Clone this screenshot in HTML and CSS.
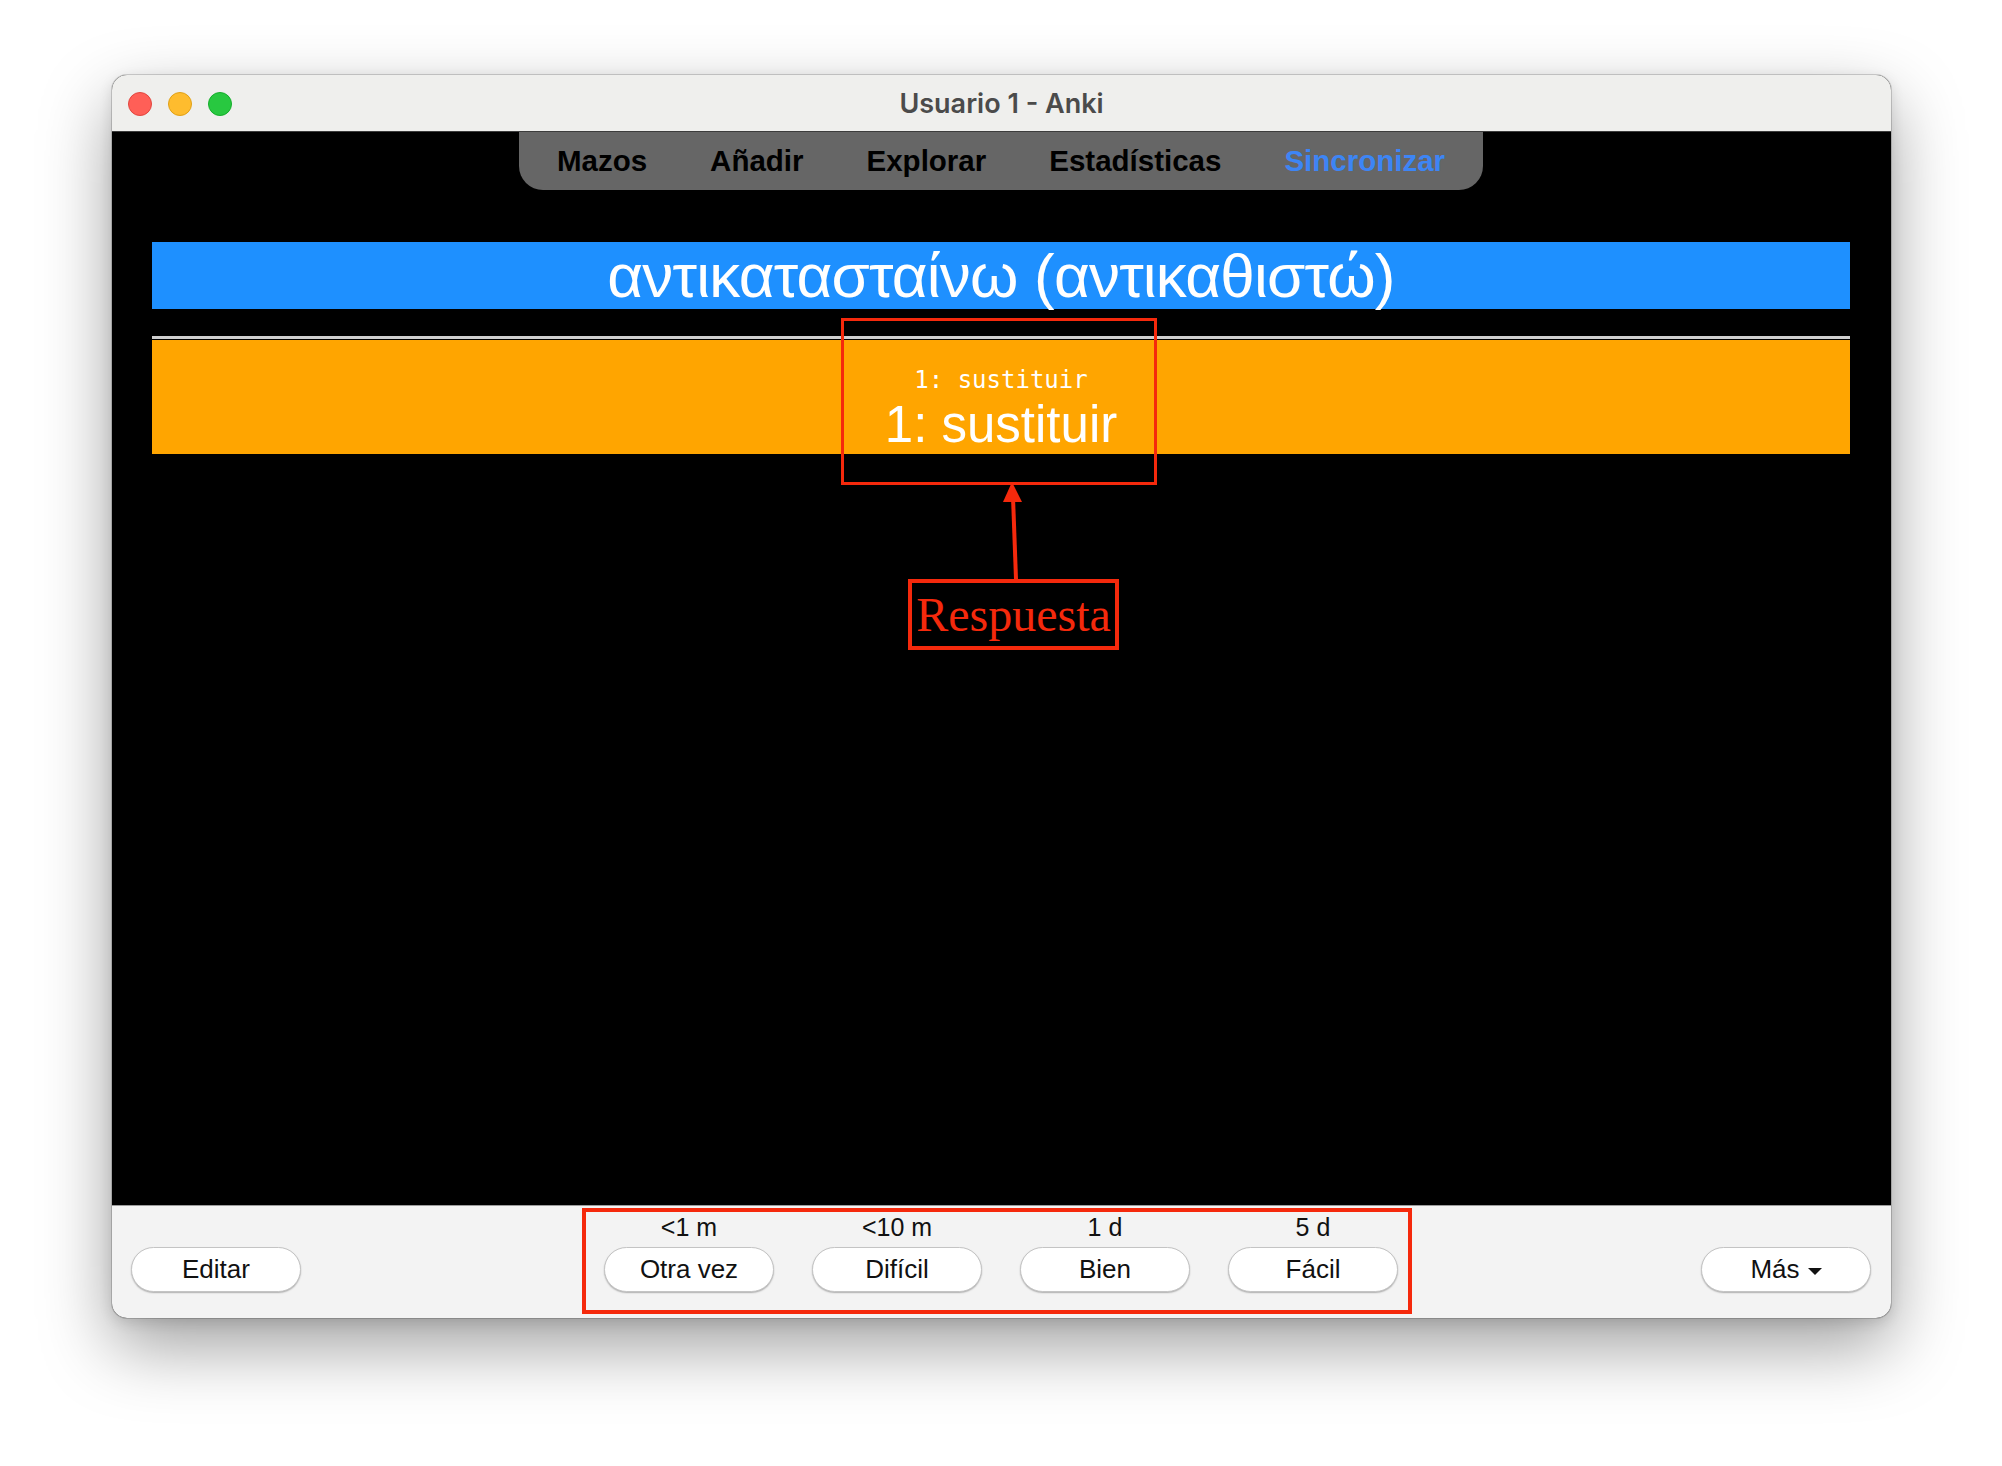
FILE: index.html
```html
<!DOCTYPE html>
<html lang="es">
<head>
<meta charset="utf-8">
<title>Usuario 1 - Anki</title>
<link rel="stylesheet" href="styles.css">
</head>
<body>
<div class="window">
  <div class="titlebar">
    <div class="lights">
      <span class="light red"></span>
      <span class="light yellow"></span>
      <span class="light green"></span>
    </div>
    <div class="title">Usuario 1 - Anki</div>
  </div>

  <div class="main">
    <nav class="toolbar">
      <a class="tab">Mazos</a>
      <a class="tab">Añadir</a>
      <a class="tab">Explorar</a>
      <a class="tab">Estadísticas</a>
      <a class="tab sync">Sincronizar</a>
    </nav>

    <div class="card">
      <div class="front">αντικατασταίνω (αντικαθιστώ)</div>
      <div class="divider"></div>
      <div class="back">
        <div class="mono">1: sustituir</div>
        <div class="big">1: sustituir</div>
      </div>
    </div>
  </div>

  <div class="bottombar">
    <div class="left"><button class="btn">Editar</button></div>
    <div class="answers">
      <div class="ans"><span class="due">&lt;1 m</span><button class="btn">Otra vez</button></div>
      <div class="ans"><span class="due">&lt;10 m</span><button class="btn">Difícil</button></div>
      <div class="ans"><span class="due">1 d</span><button class="btn">Bien</button></div>
      <div class="ans"><span class="due">5 d</span><button class="btn">Fácil</button></div>
    </div>
    <div class="right"><button class="btn more">Más<span class="caret"></span></button></div>
  </div>

  <div class="anno-box anno-answer"></div>
  <svg class="anno-arrow" width="40" height="110" viewBox="0 0 40 110">
    <line x1="24" y1="104" x2="21" y2="22" stroke="#f5290c" stroke-width="4"/>
    <polygon points="20,7 11,27 30,27" fill="#f5290c"/>
  </svg>
  <div class="anno-label">Respuesta</div>
  <div class="anno-box anno-buttons"></div>
</div>
</body>
</html>
```

FILE: styles.css
```css
* { box-sizing: border-box; }

html, body {
  margin: 0;
  padding: 0;
  background: #ffffff;
}

body {
  width: 2002px;
  height: 1466px;
  padding: 75px 0 0 112px;
  font-family: "Liberation Sans", Arial, sans-serif;
}

.window {
  position: relative;
  width: 1779px;
  height: 1243px;
  border-radius: 15px;
  overflow: hidden;
  display: flex;
  flex-direction: column;
  background: #000;
  box-shadow: 0 0 0 1px rgba(0, 0, 0, 0.16), 0 28px 70px rgba(0, 0, 0, 0.38), 0 4px 14px rgba(0, 0, 0, 0.12);
}

/* title bar */
.titlebar {
  position: relative;
  height: 57px;
  flex: none;
  background: #efefed;
  border-bottom: 1px solid #3c3c3c;
  display: flex;
  align-items: center;
  justify-content: center;
}

.lights {
  position: absolute;
  left: 16px;
  top: 17px;
  display: flex;
  gap: 16px;
}

.light {
  width: 24px;
  height: 24px;
  border-radius: 50%;
  display: block;
}
.light.red { background: #ff5f57; border: 1px solid #e2463f; }
.light.yellow { background: #febc2e; border: 1px solid #e1a116; }
.light.green { background: #28c840; border: 1px solid #14ae2b; }

.title {
  font-family: "Inter", "Liberation Sans", sans-serif;
  font-weight: 600;
  font-size: 27px;
  color: #4b4b4b;
  margin-top: 1px;
}

/* main black area */
.main {
  flex: 1;
  background: #000;
  display: flex;
  flex-direction: column;
}

.toolbar {
  align-self: center;
  display: flex;
  gap: 63px;
  padding: 0 38px;
  height: 58px;
  background: #666666;
  border-radius: 0 0 24px 24px;
  margin-left: -1px;
}

.tab {
  font-family: "Liberation Sans", Arial, sans-serif;
  font-weight: 700;
  font-size: 29.5px;
  line-height: 58px;
  color: #000;
  text-decoration: none;
}
.tab.sync { color: #3d85f5; }

.card {
  margin: 52px 41px 0 40px;
}

.front {
  background: #1e90ff;
  color: #fff;
  text-align: center;
  font-family: "Liberation Sans", Arial, sans-serif;
  font-size: 62px;
  letter-spacing: -0.8px;
  line-height: 67px;
  height: 67px;
  white-space: nowrap;
}

.divider {
  margin-top: 27px;
  height: 3px;
  background: #cfcfcf;
  margin-bottom: 1px;
}

.back {
  background: #ffa500;
  color: #fff;
  text-align: center;
  padding-top: 25px;
  height: 114px;
}

.mono {
  font-family: "DejaVu Sans Mono", "Liberation Mono", monospace;
  font-size: 24px;
  line-height: 31px;
}

.big {
  font-family: "Liberation Sans", Arial, sans-serif;
  font-size: 51px;
  line-height: 57px;
}

/* bottom bar */
.bottombar {
  height: 113px;
  flex: none;
  background: #f3f3f3;
  border-top: 1px solid #9c9c9c;
  display: grid;
  grid-template-columns: 1fr auto 1fr;
  align-items: end;
  padding: 0 20px 26px 19px;
}

.left { justify-self: start; }
.right { justify-self: end; }

.answers {
  display: flex;
  gap: 38px;
}

.ans {
  display: flex;
  flex-direction: column;
  align-items: center;
}

.due {
  font-size: 25px;
  line-height: 28px;
  color: #111;
  margin-bottom: 6px;
}

.btn {
  width: 170px;
  height: 45px;
  border-radius: 23px;
  border: 1px solid #c4c4c4;
  background: #ffffff;
  box-shadow: 0 1px 1.5px rgba(0, 0, 0, 0.28);
  font-family: "Liberation Sans", Arial, sans-serif;
  font-size: 26px;
  color: #111;
  padding: 0;
  display: flex;
  align-items: center;
  justify-content: center;
}

.more { gap: 8px; }

.caret {
  display: inline-block;
  width: 0;
  height: 0;
  border-left: 7px solid transparent;
  border-right: 7px solid transparent;
  border-top: 7px solid #111;
  margin-top: 4px;
}

/* annotations overlay */
.anno-box {
  position: absolute;
  border: 3px solid #f5290c;
}

.anno-answer {
  left: 729px;
  top: 243px;
  width: 316px;
  height: 167px;
}

.anno-buttons {
  left: 470px;
  top: 1133px;
  width: 830px;
  height: 106px;
  border-width: 4px;
}

.anno-arrow {
  position: absolute;
  left: 880px;
  top: 400px;
}

.anno-label {
  position: absolute;
  left: 796px;
  top: 504px;
  width: 211px;
  height: 71px;
  border: 4px solid #f5290c;
  color: #f5290c;
  font-family: "Liberation Serif", "Times New Roman", serif;
  font-size: 48px;
  line-height: 63px;
  text-align: center;
  white-space: nowrap;
}
```
